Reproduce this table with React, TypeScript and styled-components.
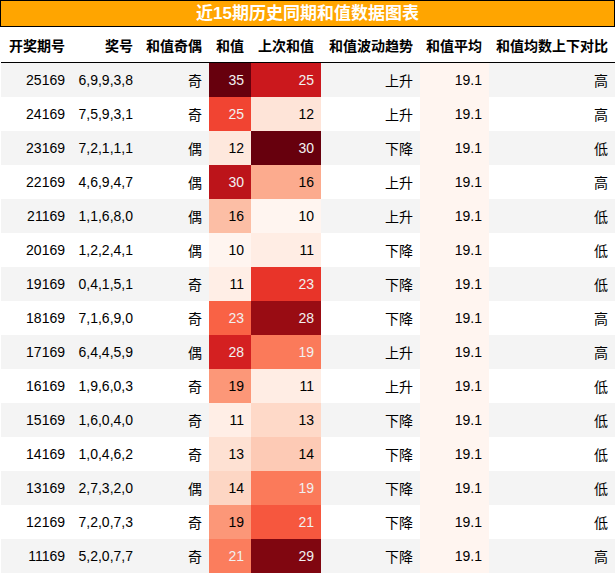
import React from "react";
import styled, { createGlobalStyle } from "styled-components";

const Global = createGlobalStyle`
  html, body { margin: 0; padding: 0; background: #ffffff; }
  body { font-family: "Liberation Sans", "Noto Sans CJK SC", sans-serif; }
`;

const Wrapper = styled.div`
  width: 615px;
`;

const Title = styled.div`
  height: 25px;
  border: 1px solid #000000;
  background: #ffa500;
  color: #ffffff;
  font-weight: bold;
  font-size: 17px;
  line-height: 25px;
  text-align: center;
  font-family: "Liberation Sans", "Noto Sans CJK SC", sans-serif;
`;

const Table = styled.table`
  border-collapse: collapse;
  table-layout: fixed;
  width: 614px;
  margin-left: 1px;
  font-size: 14px;
  color: #000000;
`;

const HeadCell = styled.th`
  height: 35px;
  padding: 0 7px 0 0;
  text-align: right;
  font-weight: bold;
  white-space: nowrap;
  border-bottom: 1px solid #000000;
`;

const Row = styled.tr<{ $odd: boolean }>`
  background: ${(p) => (p.$odd ? "#f4f4f4" : "#ffffff")};
`;

const Cell = styled.td<{ $bg?: string; $fg?: string }>`
  height: 34px;
  padding: 0 7px 0 0;
  text-align: right;
  white-space: nowrap;
  background: ${(p) => p.$bg ?? "transparent"};
  color: ${(p) => p.$fg ?? "#000000"};
`;

const REDS: [number, number, number][] = [
  [1.0, 0.96078431372549, 0.94117647058823528],
  [0.99607843137254903, 0.8784313725490196, 0.82352941176470584],
  [0.9882352941176471, 0.73333333333333328, 0.63137254901960782],
  [0.9882352941176471, 0.5725490196078431, 0.44705882352941179],
  [0.98431372549019602, 0.41568627450980394, 0.29019607843137257],
  [0.93725490196078431, 0.23137254901960785, 0.17254901960784313],
  [0.79607843137254897, 0.094117647058823528, 0.11372549019607843],
  [0.6470588235294118, 0.058823529411764705, 0.08235294117647058],
  [0.40392156862745099, 0.0, 0.05098039215686274],
];

function reds(t: number): [number, number, number] {
  const x = Math.max(0, Math.min(1, t)) * (REDS.length - 1);
  const i = Math.min(REDS.length - 2, Math.floor(x));
  const f = x - i;
  const a = REDS[i];
  const b = REDS[i + 1];
  return [a[0] + (b[0] - a[0]) * f, a[1] + (b[1] - a[1]) * f, a[2] + (b[2] - a[2]) * f];
}

function lum(c: [number, number, number]) {
  const lin = (v: number) => (v <= 0.03928 ? v / 12.92 : Math.pow((v + 0.055) / 1.055, 2.4));
  return 0.2126 * lin(c[0]) + 0.7152 * lin(c[1]) + 0.0722 * lin(c[2]);
}

function toHex(c: [number, number, number]) {
  return (
    "#" +
    c
      .map((v) =>
        Math.round(v * 255)
          .toString(16)
          .padStart(2, "0")
      )
      .join("")
  );
}

function grad(v: number, min: number, max: number) {
  const t = max === min ? 0 : (v - min) / (max - min);
  const c = reds(t);
  return { bg: toHex(c), fg: lum(c) < 0.408 ? "#f1f1f1" : "#000000" };
}

type R = [number, string, string, number, number, string, string];

const rows: R[] = [
  [25169, "6,9,9,3,8", "奇", 35, 25, "上升", "高"],
  [24169, "7,5,9,3,1", "奇", 25, 12, "上升", "高"],
  [23169, "7,2,1,1,1", "偶", 12, 30, "下降", "低"],
  [22169, "4,6,9,4,7", "偶", 30, 16, "上升", "高"],
  [21169, "1,1,6,8,0", "偶", 16, 10, "上升", "低"],
  [20169, "1,2,2,4,1", "偶", 10, 11, "下降", "低"],
  [19169, "0,4,1,5,1", "奇", 11, 23, "下降", "低"],
  [18169, "7,1,6,9,0", "奇", 23, 28, "下降", "高"],
  [17169, "6,4,4,5,9", "偶", 28, 19, "上升", "高"],
  [16169, "1,9,6,0,3", "奇", 19, 11, "上升", "低"],
  [15169, "1,6,0,4,0", "奇", 11, 13, "下降", "低"],
  [14169, "1,0,4,6,2", "奇", 13, 14, "下降", "低"],
  [13169, "2,7,3,2,0", "偶", 14, 19, "下降", "低"],
  [12169, "7,2,0,7,3", "奇", 19, 21, "下降", "低"],
  [11169, "5,2,0,7,7", "奇", 21, 29, "下降", "高"],
];

const headers = ["开奖期号", "奖号", "和值奇偶", "和值", "上次和值", "和值波动趋势", "和值平均", "和值均数上下对比"];
const widths = [71, 68, 69, 42, 70, 99, 69, 126];

export default function App() {
  const sums = rows.map((r) => r[3]);
  const prevs = rows.map((r) => r[4]);
  const sMin = Math.min(...sums);
  const sMax = Math.max(...sums);
  const pMin = Math.min(...prevs);
  const pMax = Math.max(...prevs);
  const avg = grad(19.1, 19.1, 19.1);
  return (
    <Wrapper>
      <Global />
      <Title>近15期历史同期和值数据图表</Title>
      <Table>
        <colgroup>
          {widths.map((w, i) => (
            <col key={i} style={{ width: w }} />
          ))}
        </colgroup>
        <thead>
          <tr>
            {headers.map((h) => (
              <HeadCell key={h}>{h}</HeadCell>
            ))}
          </tr>
        </thead>
        <tbody>
          {rows.map((r, i) => {
            const s = grad(r[3], sMin, sMax);
            const p = grad(r[4], pMin, pMax);
            return (
              <Row key={r[0]} $odd={i % 2 === 0}>
                <Cell>{r[0]}</Cell>
                <Cell>{r[1]}</Cell>
                <Cell>{r[2]}</Cell>
                <Cell $bg={s.bg} $fg={s.fg}>{r[3]}</Cell>
                <Cell $bg={p.bg} $fg={p.fg}>{r[4]}</Cell>
                <Cell>{r[5]}</Cell>
                <Cell $bg={avg.bg} $fg={avg.fg}>19.1</Cell>
                <Cell>{r[6]}</Cell>
              </Row>
            );
          })}
        </tbody>
      </Table>
    </Wrapper>
  );
}
